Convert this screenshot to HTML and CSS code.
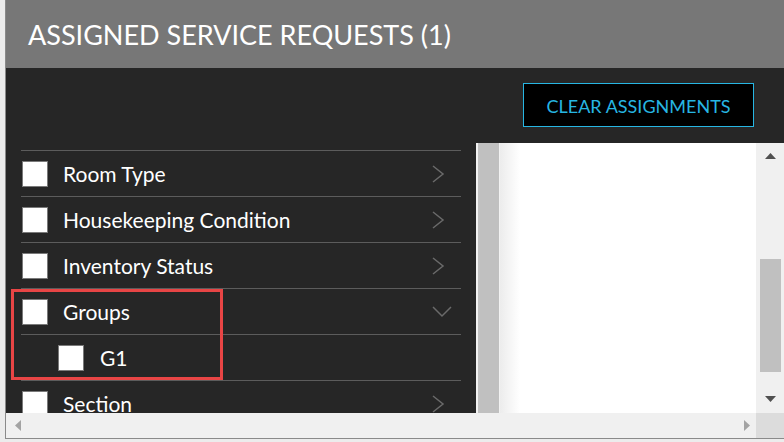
FILE: index.html
```html
<html>
  <head>
    <title>Assigned Service Requests</title>
    <link rel="stylesheet" href="styles.css">
  </head>
  <body>
    <div class="window">
      <div class="header">
        <h1>ASSIGNED SERVICE REQUESTS (1)</h1>
      </div>
      <div class="toolbar">
        <button class="btn-clear">CLEAR ASSIGNMENTS</button>
      </div>
      <div class="viewport">
        <div class="filters">
          <div class="row">
            <span class="check"></span><span class="label">Room Type</span>
            <svg class="chev" width="20" height="18" viewBox="0 0 20 18"><polyline points="1,1 11,9 1,17" /></svg>
          </div>
          <div class="row">
            <span class="check"></span><span class="label">Housekeeping Condition</span>
            <svg class="chev" width="20" height="18" viewBox="0 0 20 18"><polyline points="1,1 11,9 1,17" /></svg>
          </div>
          <div class="row">
            <span class="check"></span><span class="label">Inventory Status</span>
            <svg class="chev" width="20" height="18" viewBox="0 0 20 18"><polyline points="1,1 11,9 1,17" /></svg>
          </div>
          <div class="row">
            <span class="check"></span><span class="label">Groups</span>
            <svg class="chev" width="20" height="12" viewBox="0 0 20 12"><polyline points="1,1 10,10 19,1" /></svg>
          </div>
          <div class="row sub">
            <span class="check"></span><span class="label">G1</span>
          </div>
          <div class="row">
            <span class="check"></span><span class="label">Section</span>
            <svg class="chev" width="20" height="18" viewBox="0 0 20 18"><polyline points="1,1 11,9 1,17" /></svg>
          </div>
          <div class="highlight"></div>
        </div>
        <div class="split-bar"><div class="split-thumb"></div></div>
        <div class="pane"></div>
        <div class="vscroll">
          <svg class="arrow" width="11" height="6" viewBox="0 0 11 6"><polygon points="0,6 5.5,0 11,6" /></svg>
          <div class="vthumb"></div>
          <svg class="arrow" width="11" height="6" viewBox="0 0 11 6"><polygon points="0,0 11,0 5.5,6" /></svg>
        </div>
        <div class="hscroll">
          <svg class="arrow off" width="6" height="11" viewBox="0 0 6 11"><polygon points="6,0 6,11 0,5.5" /></svg>
          <svg class="arrow off" width="6" height="11" viewBox="0 0 6 11"><polygon points="0,0 6,5.5 0,11" /></svg>
        </div>
        <div class="corner"></div>
      </div>
    </div>
  </body>
</html>
```
FILE: styles.css
```css
html, body {
  margin: 0;
  width: 100%;
  height: 100%;
  overflow: hidden;
}
body {
  background: #ececec;
  font-family: Lato, "Open Sans", sans-serif;
  color: #fff;
}

.window {
  margin-left: 5px;
  width: 778px;
  height: 438px;
  border-left: 1px solid #8a8a8a;
  border-bottom: 1px solid #8a8a8a;
  background: #262626;
  display: flex;
  flex-direction: column;
}

.header {
  height: 68px;
  background: #777;
  display: flex;
  align-items: center;
  padding-left: 22px;
}
h1 {
  margin: 0;
  font-weight: normal;
  font-size: 27px;
  padding-top: 1px;
}

.toolbar {
  height: 75px;
  display: flex;
  justify-content: flex-end;
  align-items: flex-start;
  padding: 15px 30px 0 0;
  box-sizing: border-box;
}
.btn-clear {
  width: 231px;
  height: 44px;
  background: #000;
  border: 1px solid #27b6e3;
  color: #27b6e3;
  font-family: Lato, sans-serif;
  font-size: 18px;
  padding: 2px 0 0;
}

.viewport {
  display: grid;
  grid-template-columns: 470px 24px 256px 28px;
  grid-template-rows: 270px 25px;
}

/* filter list */
.filters {
  position: relative;
  overflow: hidden;
  padding: 7px 15px 0;
}
.row {
  height: 45px;
  border-top: 1px solid #5c5c5c;
  display: flex;
  align-items: center;
  padding-left: 1px;
}
.row.sub {
  padding-left: 37px;
}
.check {
  width: 24px;
  height: 24px;
  background: #fff;
  border: 1px solid #7a7a7a;
  flex: none;
}
.label {
  margin-left: 15px;
  font-size: 21px;
  flex: 1;
}
.row.sub .label {
  margin-left: 16px;
}
.chev {
  margin-right: 9px;
  fill: none;
  stroke: #6a6a6a;
  stroke-width: 1.5;
}
.highlight {
  position: absolute;
  left: 5px;
  top: 146px;
  width: 206px;
  height: 85px;
  border: 3px solid #e84545;
}

/* splitter between list and detail pane */
.split-bar {
  background: #f2f2f2;
  padding: 0 1px 0 2px;
}
.split-thumb {
  height: 100%;
  background: #c0c0c0;
}
.pane {
  background: linear-gradient(to right, #ececec, #fff 20px);
}

/* scrollbars */
.vscroll {
  background: #f0f0f0;
  display: flex;
  flex-direction: column;
  align-items: center;
  padding-top: 10px;
}
.vthumb {
  width: 21px;
  height: 113px;
  background: #c0c0c0;
  margin: 100px 0 24px;
}
.arrow {
  fill: #505050;
}
.arrow.off {
  fill: #a3a3a3;
}
.hscroll {
  grid-column: 1 / 4;
  background: #f0f0f0;
  display: flex;
  justify-content: space-between;
  align-items: center;
  padding: 0 6px 1px 9px;
}
.corner {
  background: #dcdcdc;
}
```
